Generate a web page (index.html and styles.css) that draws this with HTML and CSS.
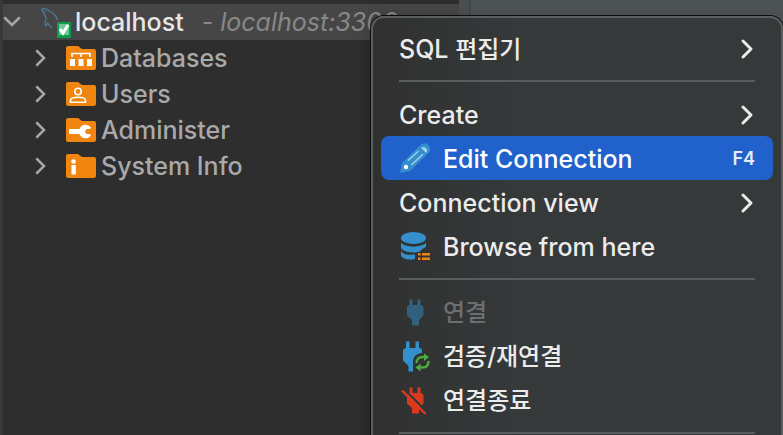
FILE: index.html
```html
<!DOCTYPE html>
<html lang="ko">
<head>
<meta charset="utf-8">
<title>Database Navigator</title>
<link rel="stylesheet" href="styles.css">
</head>
<body>
<main class="app">
  <nav class="navigator" aria-label="Database navigator">
    <ul class="tree">
      <li class="node node-root">
        <svg class="toggle" viewBox="0 0 18 18"><path d="M2 5l7 7 7-7"/></svg>
        <svg class="root-icon" viewBox="0 0 32 32">
          <g fill="none" stroke="#4f7f9f" stroke-width="1.2">
            <path d="M1.500 3.500C4 2 7 3 9 5c4 1.500 7 5 8.500 9M1.500 3.500c1 1.500 2.500 2 2.500 4 1 2 2.500 3.500 2 6-1 2-1 5 0 6.500 1-.5 1-2 1.500-3 1.500 2 3 4 5 5"/>
            <path d="M5 5.500h1"/>
          </g>
          <path fill="#0e9b4b" d="M17 16h14v16H17z"/>
          <path fill="#6cc795" d="M19 18h10v11H19z"/>
          <path fill="none" stroke="#fff" stroke-width="3" d="M20 23l3 4 5-8"/>
        </svg>
        <span class="root-name">localhost</span>
        <span class="root-host">- localhost:3306</span>
      </li>
      <li class="node">
        <svg class="toggle" viewBox="0 0 18 18"><path d="M6 2l7 7-7 7"/></svg>
        <svg class="folder" viewBox="0 0 30 24">
          <path class="folder-shape" d="M2 0h10l4 3h12a2 2 0 0 1 2 2v17a2 2 0 0 1-2 2H2a2 2 0 0 1-2-2V2a2 2 0 0 1 2-2z"/>
          <path class="line" d="M6 11V7.500h18V11M15 7v4"/>
          <path class="solid" d="M4 13h5v7H4zM12.500 13h5v7h-5zM21 13h5v7h-5z"/>
        </svg>
        <span>Databases</span>
      </li>
      <li class="node">
        <svg class="toggle" viewBox="0 0 18 18"><path d="M6 2l7 7-7 7"/></svg>
        <svg class="folder" viewBox="0 0 30 24">
          <path class="folder-shape" d="M2 0h10l4 3h12a2 2 0 0 1 2 2v17a2 2 0 0 1-2 2H2a2 2 0 0 1-2-2V2a2 2 0 0 1 2-2z"/>
          <g class="line"><circle cx="12" cy="9.500" r="3.200"/><path d="M4.500 20.200v-1.700c0-2.300 4-3.200 7.500-3.200s7.500.9 7.500 3.200v1.700z"/></g>
        </svg>
        <span>Users</span>
      </li>
      <li class="node">
        <svg class="toggle" viewBox="0 0 18 18"><path d="M6 2l7 7-7 7"/></svg>
        <svg class="folder" viewBox="0 0 30 24">
          <path class="folder-shape" d="M2 0h10l4 3h12a2 2 0 0 1 2 2v17a2 2 0 0 1-2 2H2a2 2 0 0 1-2-2V2a2 2 0 0 1 2-2z"/>
          <path class="solid" d="M4 11h9.500A6.500 6.500 0 0 1 25 9.500l-1 1.500h-3.500L19 13.500l1.500 2.500H24l1 1.500A6.500 6.500 0 0 1 13.500 16H4a1 1 0 0 1-1-1v-3a1 1 0 0 1 1-1z"/>
        </svg>
        <span>Administer</span>
      </li>
      <li class="node">
        <svg class="toggle" viewBox="0 0 18 18"><path d="M6 2l7 7-7 7"/></svg>
        <svg class="folder" viewBox="0 0 30 24">
          <path class="folder-shape" d="M2 0h10l4 3h12a2 2 0 0 1 2 2v17a2 2 0 0 1-2 2H2a2 2 0 0 1-2-2V2a2 2 0 0 1 2-2z"/>
          <circle class="solid" cx="7.500" cy="7.500" r="2.300"/><path class="solid" d="M5.500 11h4.300v9.500H5.500z"/>
        </svg>
        <span>System Info</span>
      </li>
    </ul>
  </nav>
  <section class="editor" aria-label="Editor"></section>

  <div class="menu" role="menu">
    <button class="item" role="menuitem"><span class="label">SQL <span class="ko">편집기</span></span><svg class="arrow" viewBox="0 0 18 22"><path d="M6 3l8 8-8 8"/></svg></button>
    <hr class="divider">
    <button class="item" role="menuitem"><span class="label">Create</span><svg class="arrow" viewBox="0 0 18 22"><path d="M6 3l8 8-8 8"/></svg></button>
    <button class="item item-active" role="menuitem">
      <svg class="icon" viewBox="0 0 32 32">
        <path fill="#348fcd" d="M1 30l2-10L21.500 2a5.500 5.500 0 0 1 8 8L11 28z"/>
        <path fill="none" stroke="#a9d2ee" stroke-width="1.300" d="M9 17.500L19.500 8M12.500 22L24 11"/>
        <circle cx="7" cy="24" r="2.200" fill="#fff"/>
        <path fill="#a9d2ee" d="M22 4.500c4-2 8 2 5 5.500z"/>
      </svg>
      <span class="label">Edit Connection</span><kbd class="shortcut">F4</kbd>
    </button>
    <button class="item" role="menuitem"><span class="label">Connection view</span><svg class="arrow" viewBox="0 0 18 22"><path d="M6 3l8 8-8 8"/></svg></button>
    <button class="item" role="menuitem">
      <svg class="icon" viewBox="0 0 32 32">
        <g fill="#348fcd">
          <ellipse cx="14.500" cy="7" rx="12.500" ry="6"/>
          <path d="M2 11.500c4 5.500 21 5.500 25 0V16l-3 1.500-3.500 3C14 22.500 4 21 2 17zM2 20c2 3.500 8 4.500 14 3.500V28c-7 1.500-14-.5-14-4z"/>
        </g>
        <path fill="#f0820f" d="M19 22h2.500v2.500H19zM23 22h8v2.500h-8zM19 26.500h2.500V29H19zM23 26.500h8V29h-8z"/>
      </svg>
      <span class="label">Browse from here</span>
    </button>
    <hr class="divider">
    <button class="item" role="menuitem" disabled>
      <svg class="icon" viewBox="0 0 32 32"><path fill="#34607f" d="M10.500 2.500h3V8h5V2.500h3V8h1l2 2v8.500L20 23v5.500h-7V23l-5-4.500V10l2-2h.500z"/></svg>
      <span class="label ko">연결</span>
    </button>
    <button class="item" role="menuitem">
      <svg class="icon" viewBox="0 0 32 32">
        <path fill="#348fcd" d="M7 .500h3.500V7h6V.500H20V7h1.500l1.500 2v3c-6 .5-9 4-9 9 0 2 .5 4 0 5v4.500H9.500V25L4 19.500V9l2-2h1z"/>
        <g fill="none" stroke="#4bab3c" stroke-width="2.400"><path d="M17.500 22c0-4.500 3-6 6-6H28M29.500 20c0 5-3 6.500-6 6.500H20"/></g>
        <path fill="#4bab3c" d="M25 12.500l5 3.500-5 4zM21.500 22.500l-5 4 5 4z"/>
      </svg>
      <span class="label ko">검증/재연결</span>
    </button>
    <button class="item" role="menuitem">
      <svg class="icon" viewBox="0 0 32 32">
        <path fill="#dc3a1e" d="M10.500 2.500h3V8h5V2.500h3V8h1l2 2v8.500L20 23v5.500h-7V23l-5-4.500V10l2-2h.500z"/>
        <path stroke="#33373a" stroke-width="2" d="M5 4l24 24"/>
        <path stroke="#dc3a1e" stroke-width="2.400" d="M3 5.500L26.500 29"/>
      </svg>
      <span class="label ko">연결종료</span>
    </button>
    <hr class="divider">
  </div>
</main>
</body>
</html>
```
FILE: styles.css
```css
* { box-sizing: border-box; }

body {
  margin: 0;
  background: #2e2e2e;
  color: #a9a9a9;
  font: 500 25px/36px Inter, "Noto Sans CJK KR", sans-serif;
  overflow: hidden;
}

.app {
  display: grid;
  grid-template-columns: 459px 1fr;
  min-height: 100vh;
  position: relative;
}

.navigator {
  border-left: 3px solid #393939;
  padding-top: 4px;
}

.editor {
  background: #4e5355;
  border-left: 10px solid #4a4f52;
  box-shadow: inset 2px 0 #44494b;
}

.tree {
  list-style: none;
  margin: 0;
  padding: 0;
}

.node {
  display: flex;
  align-items: center;
  height: 36px;
  padding-left: 28px;
  white-space: nowrap;
}

.node-root {
  padding-left: 0;
  background: #464646;
}

.toggle {
  flex: none;
  width: 18px;
  height: 18px;
  fill: none;
  stroke: #a6a6a6;
  stroke-width: 2.5;
  stroke-linecap: round;
}

.root-icon {
  flex: none;
  width: 32px;
  height: 32px;
  margin: 0 3px 0 19px;
}

.root-name { color: #e6e6e6; }

.root-host {
  margin-left: 18px;
  color: #888;
  font-weight: 400;
  font-style: italic;
}

.folder {
  flex: none;
  width: 30px;
  height: 24px;
  margin: 0 5px 0 17px;
}

.folder-shape { fill: #f0850f; }
.line { fill: none; stroke: #fff; stroke-width: 1.6; }
.solid { fill: #fff; }

.menu {
  position: absolute;
  top: 16px;
  left: 371px;
  right: 0;
  padding: 8px;
  border: 2px solid #5b5e5f;
  border-radius: 13px;
  background: linear-gradient(90deg, #303030, #35393a 35%);
  box-shadow: 0 0 0 1px #0c0c0c, 0 6px 20px rgba(0, 0, 0, 0.3);
}

.item {
  display: flex;
  align-items: center;
  gap: 12px;
  width: 100%;
  height: 44px;
  margin: 0;
  padding: 2px 18px 0;
  border: 0;
  border-radius: 8px;
  background: none;
  color: #ececec;
  font: inherit;
  text-align: left;
  white-space: nowrap;
}

.item:disabled { color: #6c6f70; }

.item-active {
  background: #2161cc;
  color: #fff;
}

.label { flex: 1; }
.ko { font-size: 24px; }

.icon {
  flex: none;
  width: 32px;
  height: 32px;
}

.arrow {
  flex: none;
  width: 18px;
  height: 22px;
  fill: none;
  stroke: #ececec;
  stroke-width: 3;
  stroke-linecap: round;
  stroke-linejoin: round;
}

.shortcut {
  font: 600 18px/36px Inter, sans-serif;
  color: #e4ecfa;
}

.divider {
  height: 2px;
  margin: 10px 18px;
  border: 0;
  background: #5a5d5e;
}
```
